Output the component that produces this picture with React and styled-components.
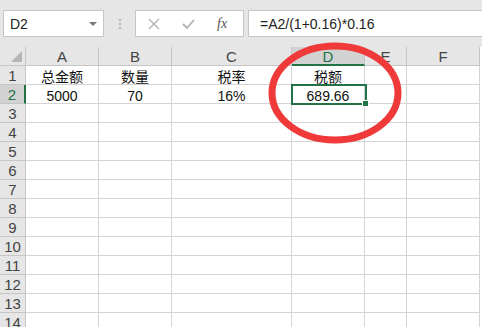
import React from 'react';
import styled, { createGlobalStyle } from 'styled-components';

const GlobalStyle = createGlobalStyle`
  html, body { margin: 0; padding: 0; background: #fff; overflow: hidden; }
  body { font-family: "Liberation Sans", "Noto Sans CJK SC", sans-serif; }
`;

const columns = [
  { key: 'A', width: 73 },
  { key: 'B', width: 73 },
  { key: 'C', width: 120 },
  { key: 'D', width: 73 },
  { key: 'E', width: 42 },
  { key: 'F', width: 73 },
];

const data = {
  1: { A: '总金额', B: '数量', C: '税率', D: '税额' },
  2: { A: '5000', B: '70', C: '16%', D: '689.66' },
};

const Toolbar = styled.div`
  height: 47px;
  background: #e6e6e6;
  display: flex;
  align-items: flex-start;
  padding-top: 10px;
  box-sizing: border-box;
`;

const NameBox = styled.div`
  margin-left: 3px;
  width: 101px;
  height: 27px;
  box-sizing: border-box;
  background: #fff;
  border: 1px solid #c6c6c6;
  display: flex;
  align-items: center;
  justify-content: space-between;
  padding: 0 6px 0 6px;
  font-size: 14px;
  color: #222;
`;

const Caret = styled.span`
  width: 0;
  height: 0;
  border-left: 4px solid transparent;
  border-right: 4px solid transparent;
  border-top: 4px solid #777;
`;

const Dots = styled.div`
  width: 31px;
  height: 27px;
  display: flex;
  flex-direction: column;
  align-items: center;
  justify-content: center;
  gap: 2px;
  span {
    width: 2px;
    height: 2px;
    background: #b8b8b8;
  }
`;

const ActionBox = styled.div`
  width: 109px;
  height: 27px;
  box-sizing: border-box;
  background: #fff;
  border: 1px solid #c6c6c6;
  display: flex;
  align-items: center;
  padding-left: 12px;
  gap: 22px;
`;

const Fx = styled.span`
  font-family: "Liberation Serif", serif;
  font-style: italic;
  font-size: 14px;
  color: #555;
`;

const FormulaBox = styled.div`
  margin-left: 4px;
  flex: 1;
  height: 27px;
  box-sizing: border-box;
  background: #fff;
  border: 1px solid #c6c6c6;
  border-right: none;
  display: flex;
  align-items: center;
  padding-left: 11px;
  font-size: 14px;
  color: #222;
`;

const Sheet = styled.div`
  position: relative;
  display: grid;
  grid-template-columns: 26px ${columns.map((c) => `${c.width}px`).join(' ')};
  grid-auto-rows: 19px;
  width: max-content;
`;

const Cell = styled.div`
  box-sizing: border-box;
  border-right: 1px solid #d4d4d4;
  border-bottom: 1px solid #d4d4d4;
  display: flex;
  align-items: flex-start;
  justify-content: center;
  padding-top: 3px;
  line-height: 16px;
  font-size: 14px;
  color: #111;
  white-space: nowrap;
`;

const HeadCell = styled(Cell)`
  background: ${(p) => (p.$active ? '#d2d2d2' : '#e6e6e6')};
  color: ${(p) => (p.$active ? '#217346' : '#444')};
  border-right: 1px solid ${(p) => (p.$activeRow ? '#217346' : '#c6c6c6')};
  border-right-width: ${(p) => (p.$activeRow ? '2px' : '1px')};
  border-bottom: ${(p) => (p.$activeCol ? '2px solid #217346' : '1px solid #c6c6c6')};
  padding-top: 2px;
  font-size: 15px;
`;

const Corner = styled(HeadCell)`
  position: relative;
  &::after {
    content: '';
    position: absolute;
    right: 3px;
    bottom: 3px;
    width: 0;
    height: 0;
    border-left: 11px solid transparent;
    border-bottom: 11px solid #b5b5b5;
  }
`;

const Selection = styled.div`
  position: absolute;
  left: 291px;
  top: 37px;
  width: 76px;
  height: 21px;
  box-sizing: border-box;
  border: 2px solid #217346;
  pointer-events: none;
  &::after {
    content: '';
    position: absolute;
    right: -4px;
    bottom: -4px;
    width: 5px;
    height: 5px;
    background: #217346;
    border: 1px solid #fff;
  }
`;

const Ring = styled.svg`
  position: absolute;
  left: 0;
  top: -47px;
  pointer-events: none;
`;

const rows = Array.from({ length: 14 }, (_, i) => i + 1);

export default function App() {
  return (
    <>
      <GlobalStyle />
      <Toolbar>
        <NameBox>
          D2
          <Caret />
        </NameBox>
        <Dots>
          <span />
          <span />
          <span />
        </Dots>
        <ActionBox>
          <svg width="12" height="12" viewBox="0 0 12 12">
            <path d="M1 1 L11 11 M11 1 L1 11" stroke="#b3b3b3" strokeWidth="1.4" fill="none" />
          </svg>
          <svg width="13" height="12" viewBox="0 0 13 12">
            <path d="M1 6 L5 10 L12 2" stroke="#b3b3b3" strokeWidth="1.8" fill="none" />
          </svg>
          <Fx>fx</Fx>
        </ActionBox>
        <FormulaBox>=A2/(1+0.16)*0.16</FormulaBox>
      </Toolbar>
      <Sheet>
        <Corner />
        {columns.map((c) => (
          <HeadCell key={c.key} $active={c.key === 'D'} $activeCol={c.key === 'D'}>
            {c.key}
          </HeadCell>
        ))}
        {rows.map((r) => (
          <React.Fragment key={r}>
            <HeadCell $active={r === 2} $activeRow={r === 2}>
              {r}
            </HeadCell>
            {columns.map((c) => (
              <Cell key={c.key}>{data[r] && data[r][c.key]}</Cell>
            ))}
          </React.Fragment>
        ))}
        <Selection />
        <Ring width="482" height="200" viewBox="0 0 482 200">
          <ellipse cx="335" cy="93" rx="63" ry="47" fill="none" stroke="#f03a3a" strokeWidth="7" />
        </Ring>
      </Sheet>
    </>
  );
}
